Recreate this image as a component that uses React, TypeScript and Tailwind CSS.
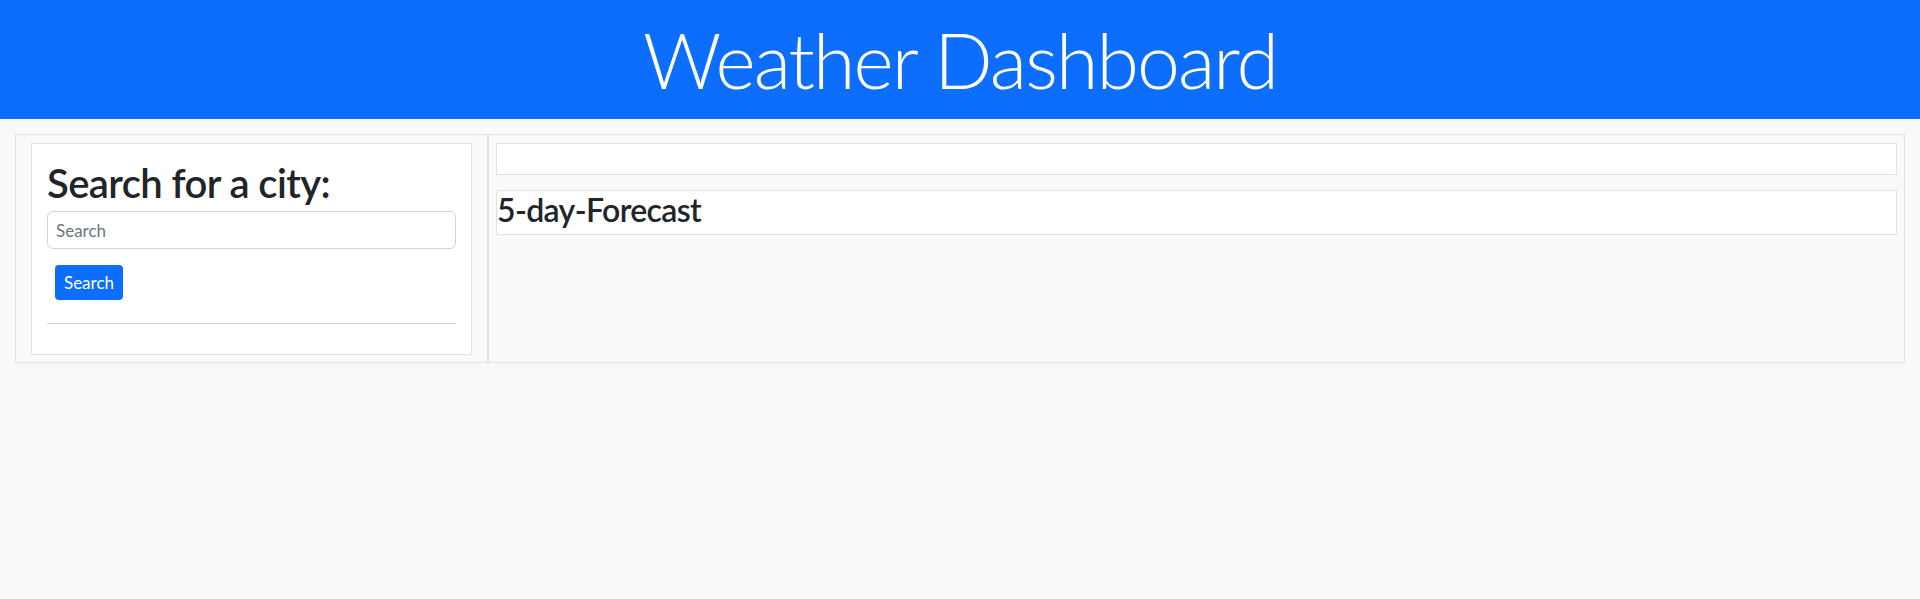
export default function App() {
  return (
    <div className="min-h-screen bg-[#f8f9fa] font-['Lato',sans-serif] text-[#212529]">
      {/* Banner */}
      <header className="h-[119px] bg-[#0d6efd] flex items-center justify-center">
        <h1 className="text-[77px] font-light leading-[1.2] tracking-[-0.025em] text-white">
          Weather Dashboard
        </h1>
      </header>

      <main className="mx-[15px] mt-[15px] flex border border-[#dee2e6]">
        {/* Search column */}
        <section className="w-[473px] shrink-0 border-r-2 border-[#dee2e6] px-[15px] pt-[8px] pb-[7px]">
          <div className="bg-white border border-[#dee2e6] p-[15px]">
            <h2 className="text-[40px] font-semibold leading-[48px] tracking-[-0.015em] mb-[4px]">
              Search for a city:
            </h2>
            <input
              type="text"
              placeholder="Search"
              className="block w-full h-[38px] rounded-[6px] border border-[#ced4da] bg-white px-[8px] text-[17px] placeholder:text-[#6c757d] outline-none"
            />
            <button className="mt-[16px] ml-[8px] h-[35px] w-[68px] rounded-[4px] bg-[#0d6efd] text-[17px] text-white">
              Search
            </button>
            <hr className="mt-[23px] mb-[15px] border-t border-[#cccccc]" />
          </div>
        </section>

        {/* Forecast column */}
        <section className="flex-1 px-[7px] pt-[8px]">
          <div className="h-[32px] bg-white border border-[#dee2e6]" />
          <div className="mt-[15px] h-[45px] bg-white border border-[#dee2e6]">
            <h3 className="text-[32px] font-semibold leading-[1.2] tracking-[-0.02em]">
              5-day-Forecast
            </h3>
          </div>
        </section>
      </main>
    </div>
  );
}
